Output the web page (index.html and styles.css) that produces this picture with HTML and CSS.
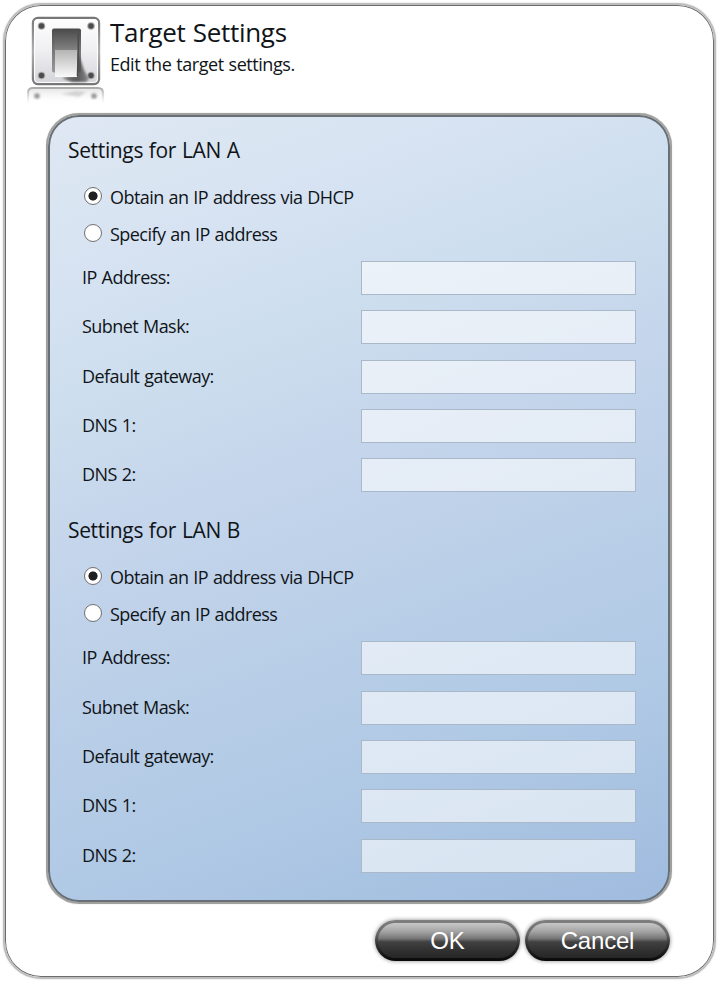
FILE: index.html
```html
<!DOCTYPE html>
<html lang="en">
<head>
<meta charset="utf-8">
<title>Target Settings</title>
<link rel="stylesheet" href="styles.css">
</head>
<body>
<main class="dialog">
  <header class="header">
    <svg class="switch" width="84" height="92" viewBox="0 0 84 92" aria-hidden="true">
      <defs>
        <linearGradient id="plate" x1="0" y1="0" x2="0" y2="1"><stop offset="0" stop-color="#fff"/><stop offset=".5" stop-color="#efeff2"/><stop offset="1" stop-color="#d3d4d8"/></linearGradient>
        <linearGradient id="rim" x1="0" y1="0" x2="0" y2="1"><stop offset="0" stop-color="#777"/><stop offset=".5" stop-color="#b0b0b0"/><stop offset="1" stop-color="#777"/></linearGradient>
        <linearGradient id="slot" x1="0" y1="0" x2="0" y2="1"><stop offset="0" stop-color="#4a4a4a"/><stop offset=".5" stop-color="#777"/><stop offset="1" stop-color="#999"/></linearGradient>
        <linearGradient id="top" x1="0" y1="0" x2="0" y2="1"><stop offset="0" stop-color="#505050"/><stop offset="1" stop-color="#858585"/></linearGradient>
        <linearGradient id="lever" x1="0" y1="0" x2="0" y2="1"><stop offset="0" stop-color="#b4b4b4"/><stop offset="1" stop-color="#fafafa"/></linearGradient>
        <linearGradient id="shade" x1="0" y1="0" x2="1" y2="0"><stop offset="0" stop-color="#555"/><stop offset=".6" stop-color="#3c3c3c"/><stop offset="1" stop-color="#777"/></linearGradient>
        <linearGradient id="fade" x1="0" y1="0" x2="0" y2="1"><stop offset="0" stop-color="#aaa"/><stop offset="1" stop-color="#ddd" stop-opacity="0"/></linearGradient>
        <linearGradient id="mirror" x1="0" y1="0" x2="0" y2="1"><stop offset="0" stop-color="#d8d8d8"/><stop offset="1" stop-color="#fff" stop-opacity="0"/></linearGradient>
        <filter id="soft"><feGaussianBlur stdDeviation="0.9"/></filter>
      </defs>
      <rect x="5.9" y="3.9" width="66.2" height="66.2" rx="5" fill="url(#plate)" stroke="url(#rim)" stroke-width="2.2"/>
      <rect x="7.6" y="5.6" width="62.8" height="62.8" rx="3.5" fill="none" stroke="#fff"/>
      <g fill="#aaa"><circle cx="14.5" cy="12" r="3.8"/><circle cx="64" cy="12" r="3.8"/><circle cx="14.5" cy="61.5" r="3.8"/><circle cx="64" cy="61.5" r="3.8"/></g>
      <g fill="#4c4c4c"><circle cx="14.5" cy="12" r="2.7"/><circle cx="64" cy="12" r="2.7"/><circle cx="14.5" cy="61.5" r="2.7"/><circle cx="64" cy="61.5" r="2.7"/></g>
      <rect x="25" y="14.5" width="29" height="44" rx="2" fill="url(#slot)"/>
      <path d="M51 38 54 47 57 56 62 65 59 68H45L35 64 50 61Z" fill="url(#shade)" opacity=".8" filter="url(#soft)"/>
      <rect x="27.5" y="17" width="24" height="20" fill="url(#top)"/>
      <path d="M28 36H50.5L50 63H28Z" fill="url(#lever)"/>
      <path d="M51.3 19V37L50.5 62" fill="none" stroke="#4c4c4c" stroke-width="1.6"/>
      <path d="M1 90V79Q1 74 6 74H71Q76 74 76 79V90Z" fill="url(#mirror)" opacity=".7"/>
      <path d="M1 90V79Q1 74 6 74H71Q76 74 76 79V90" fill="none" stroke="url(#fade)" stroke-width="2.2"/>
      <g fill="#999" filter="url(#soft)"><circle cx="10" cy="82" r="2.8"/><circle cx="67" cy="82" r="2.8"/><path d="M34 80 49 77 59 78 52 83Z" opacity=".35"/></g>
    </svg>
    <div class="titles">
      <h1 class="title">Target Settings</h1>
      <p class="subtitle">Edit the target settings.</p>
    </div>
  </header>
  <section class="panel">
    <fieldset class="group">
      <legend class="heading"><span>Settings for LAN A</span></legend>
      <label class="option first"><input type="radio" name="a" checked><span>Obtain an IP address via DHCP</span></label>
      <label class="option"><input type="radio" name="a"><span>Specify an IP address</span></label>
      <div class="fields">
        <label class="row"><span>IP Address:</span><input type="text" disabled></label>
        <label class="row"><span>Subnet Mask:</span><input type="text" disabled></label>
        <label class="row"><span>Default gateway:</span><input type="text" disabled></label>
        <label class="row"><span>DNS 1:</span><input type="text" disabled></label>
        <label class="row"><span>DNS 2:</span><input type="text" disabled></label>
      </div>
    </fieldset>
    <fieldset class="group">
      <legend class="heading"><span>Settings for LAN B</span></legend>
      <label class="option first"><input type="radio" name="b" checked><span>Obtain an IP address via DHCP</span></label>
      <label class="option"><input type="radio" name="b"><span>Specify an IP address</span></label>
      <div class="fields">
        <label class="row"><span>IP Address:</span><input type="text" disabled></label>
        <label class="row"><span>Subnet Mask:</span><input type="text" disabled></label>
        <label class="row"><span>Default gateway:</span><input type="text" disabled></label>
        <label class="row"><span>DNS 1:</span><input type="text" disabled></label>
        <label class="row"><span>DNS 2:</span><input type="text" disabled></label>
      </div>
    </fieldset>
  </section>
  <footer class="actions">
    <button class="button" type="button">OK</button>
    <button class="button" type="button">Cancel</button>
  </footer>
</main>
</body>
</html>
```
FILE: styles.css
```css
* { box-sizing: border-box; }
body {
  margin: 0;
  padding: 3px 4px 4px 3px;
  height: 984px;
  background: #fff;
  font-family: "Segoe UI", "Open Sans", "Noto Sans", sans-serif;
  font-size: 18px;
  letter-spacing: -0.55px;
  word-spacing: 0.7px;
  color: #101418;
  overflow: hidden;
}
.dialog {
  width: 713px;
  height: 976px;
  border: 2px solid #bdbdbd;
  border-radius: 38px;
  box-shadow: inset 0 0 0 1px #6c6c6c, 0 0 2px #ccc;
  background: #fff;
}
.header { display: flex; height: 108px; padding: 9px 0 0 22px; }
.switch { flex: none; }
.titles { margin-left: -1px; }
.title { margin: 0; font-size: 26px; line-height: 36px; font-weight: 400; letter-spacing: -0.3px; white-space: nowrap; }
.subtitle { margin: 0; line-height: 28px; letter-spacing: -0.45px; white-space: nowrap; }
.panel {
  width: 626px;
  height: 791px;
  margin-left: 41px;
  padding: 15px 0 0 18px;
  border: 2px solid #a0a09d;
  border-radius: 33px;
  box-shadow: inset 0 0 0 2px #696f76, 0 0 1px #aaa;
  background: linear-gradient(160deg, #dfe8f3 0%, #d7e3f2 16%, #cddeee 29%, #c5d6ec 43%, #bcd0e8 57%, #b0c9e5 77%, #9fbbde 100%);
}
.group { margin: 0; padding: 0 0 0 2px; border: 0; height: 380.4px; min-width: 0; }
.heading { padding: 0; height: 41px; line-height: 41px; font-size: 21px; letter-spacing: -0.35px; }
.option { display: flex; align-items: center; height: 37.4px; padding-left: 16px; gap: 8px; }
.first { margin-top: 7px; }
.option input {
  appearance: none;
  flex: none;
  width: 18px;
  height: 18px;
  margin: 0;
  border: 1px solid #707070;
  border-radius: 50%;
  background: #fff;
  transform: translateY(-1px);
}
.option input:checked { background: radial-gradient(circle, #202020 0 4.2px, #fff 4.9px); }
.fields { padding: 8px 0 0 14px; display: grid; gap: 15.4px; }
.row { display: grid; grid-template-columns: 279px 275px; height: 34px; align-items: center; }
.row span { transform: translateY(-0.6px); }
.row input { width: 275px; height: 34px; margin: 0; padding: 0 6px; border: 1px solid #aab9ca; border-radius: 0; background: rgba(255, 255, 255, .58); }
.actions { display: flex; gap: 5px; padding: 16px 0 0 370px; }
.button {
  width: 145px;
  height: 41px;
  padding: 0;
  border: 0;
  border-radius: 21px;
  background:
    linear-gradient(#c8c8c8 0%, #a3a3a3 25%, #747474 45%, #414141 54%, #303030 80%, #262626 100%) padding-box,
    linear-gradient(#808080 0%, #666 35%, #303030 60%, #080808 100%) border-box;
  border: 3px solid transparent;
  box-shadow: 0 0 4px #888;
  color: #fff;
  font: 24px/35px "Liberation Sans", Arial, sans-serif;
  letter-spacing: -0.2px;
}
```
